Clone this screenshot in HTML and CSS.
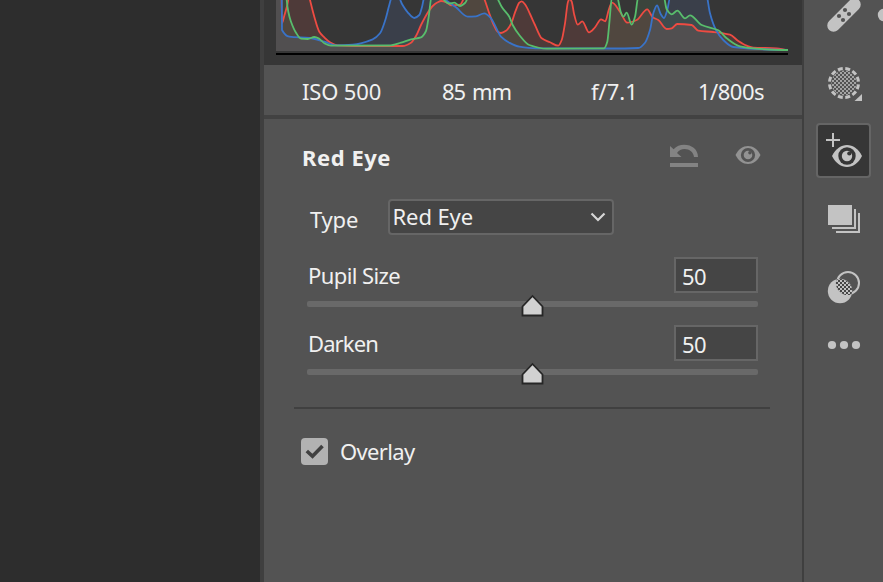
FILE: index.html
```
<!DOCTYPE html>
<html lang="en">
<head>
  <meta charset="UTF-8">
  <title>Red Eye</title>
  <link rel="stylesheet" href="styles.css">
</head>
<body>

<div class="app">
  <div class="canvas"></div>

  <div class="panel">
    <div class="histogram">
      <svg id="histogram" width="512" height="65" viewBox="276 0 512 65">
        <rect x="276" y="53" width="512" height="2" fill="#000"/>
      </svg>
    </div>

    <div class="exif">
      <span class="iso">ISO 500</span>
      <span class="focal">85 mm</span>
      <span class="aperture">f/7.1</span>
      <span class="shutter">1/800s</span>
    </div>

    <div class="tool-settings">
      <div class="heading">
        <h1>Red Eye</h1>
        <svg class="reset" width="28" height="24" viewBox="670 144 28 24" fill="#838383">
          <path d="M670 146L673.600 149.200C676.500 146 680 144.700 684 144.700C692 144.700 698 149.500 698 157H694C693.500 152 689.500 149 684.500 149C681.500 149 678.700 150.500 677 153L681.500 157H670Z"/>
          <path d="M670 163h28v4h-28z"/>
        </svg>
        <svg class="preview" width="26" height="20" viewBox="-13 -10 26 20">
          <path fill="#929292" d="M-12.500 0C-9.500 -6 -5 -9 0 -9S9.500 -6 12.500 0C9.500 6 5 9 0 9S-9.500 6 -12.500 0Z"/>
          <circle r="7.100" fill="#535353"/>
          <circle r="4.300" fill="#929292"/>
          <circle cx="1.900" cy="-2.200" r="1.700" fill="#535353"/>
        </svg>
      </div>

      <div class="type-row">
        <label>Type</label>
        <div class="select">
          <span>Red Eye</span>
          <svg width="16" height="10" viewBox="0 0 16 10"><path d="M1.500 1.500L8 8L14.500 1.500" fill="none" stroke="#d6d6d6" stroke-width="2.200"/></svg>
        </div>
      </div>

      <div class="slider">
        <div class="slider-top">
          <label class="pupil">Pupil Size</label>
          <div class="value">50</div>
        </div>
        <div class="track">
          <svg class="thumb" width="23" height="24" viewBox="0 0 23 24"><path d="M11.500 2L21.500 12.500V21.500H1.500V12.500Z"/></svg>
        </div>
      </div>

      <div class="slider">
        <div class="slider-top">
          <label class="darken">Darken</label>
          <div class="value">50</div>
        </div>
        <div class="track">
          <svg class="thumb" width="23" height="24" viewBox="0 0 23 24"><path d="M11.500 2L21.500 12.500V21.500H1.500V12.500Z"/></svg>
        </div>
      </div>

      <div class="overlay-row">
        <div class="checkbox">
          <svg width="27" height="27" viewBox="0 0 27 27"><path d="M5.800 13L11.500 18.300L21.500 8" fill="none" stroke="#404040" stroke-width="3.600"/></svg>
        </div>
        <label>Overlay</label>
      </div>
    </div>
  </div>

  <div class="toolbar">
    <!-- healing -->
    <svg width="67" height="50" viewBox="816 0 67 50">
      <path d="M833.500 25.500L854.500 4.500" stroke="#c3c3c3" stroke-width="12.500" stroke-linecap="round"/>
      <g fill="#535353">
        <circle cx="845" cy="10" r="2.100"/><circle cx="839" cy="16" r="2.100"/>
        <circle cx="849" cy="14" r="2.100"/><circle cx="843" cy="20" r="2.100"/>
      </g>
      <circle cx="884" cy="15" r="6.200" fill="#c3c3c3"/>
    </svg>
    <!-- masking -->
    <svg width="67" height="73" viewBox="816 50 67 73">
      <defs>
        <pattern id="checker" width="4" height="4" patternUnits="userSpaceOnUse">
          <path d="M0 0h2v2h-2zM2 2h2v2h-2z" fill="#c3c3c3"/>
        </pattern>
        <pattern id="checker-soft" width="4" height="4" patternUnits="userSpaceOnUse">
          <path d="M0 0h2v2h-2zM2 2h2v2h-2z" fill="#a4a4a4"/>
        </pattern>
      </defs>
      <circle cx="844" cy="83" r="12.500" fill="url(#checker-soft)"/>
      <circle cx="844" cy="83" r="14.500" fill="none" stroke="#c3c3c3" stroke-width="3" pathLength="120" stroke-dasharray="6.500 3.500" stroke-dashoffset="-1.750"/>
      <path d="M862 94V101H854.500Z" fill="#c3c3c3"/>
    </svg>
    <!-- red eye -->
    <div class="tool-active">
      <svg width="51" height="51" viewBox="818 125 51 51">
        <path d="M826 140h14M833 133v14" stroke="#c3c3c3" stroke-width="2"/>
        <g transform="translate(847 156)">
          <path fill="#c3c3c3" d="M-15 0C-11 -7.500 -6 -11 0 -11S11 -7.500 15 0C11 7.500 6 11 0 11S-11 7.500 -15 0Z"/>
          <circle r="8.700" fill="#363636"/>
          <circle r="5.200" fill="#c3c3c3"/>
          <circle cx="2.300" cy="-2.500" r="2.100" fill="#363636"/>
        </g>
      </svg>
    </div>
    <!-- snapshots -->
    <svg width="67" height="67" viewBox="816 178 67 67">
      <path d="M828 205h24v20h-24zM854 209h2v20h-24v-2h22zM858 213h2v20h-24v-2h22z" fill="#c3c3c3"/>
    </svg>
    <!-- presets -->
    <svg width="67" height="75" viewBox="816 245 67 75">
      <circle cx="840" cy="291" r="12.200" fill="#c3c3c3"/>
      <circle cx="848" cy="283" r="11" fill="none" stroke="#c3c3c3" stroke-width="2"/>
      <path d="M836.500 279.500A12 12 0 0 0 851.500 294.500A12 12 0 0 0 836.500 279.500Z" fill="#464646"/>
      <path d="M836.500 279.500A12 12 0 0 0 851.500 294.500A12 12 0 0 0 836.500 279.500Z" fill="url(#checker)"/>
    </svg>
    <!-- more -->
    <svg width="67" height="50" viewBox="816 320 67 50" fill="#c3c3c3">
      <circle cx="832" cy="345" r="4.100"/><circle cx="844" cy="345" r="4.100"/><circle cx="856" cy="345" r="4.100"/>
    </svg>
  </div>
</div>

<script src="script.js"></script>
</body>
</html>
```
FILE: styles.css
```
* {
  box-sizing: border-box;
}
body {
  margin: 0;
  background: #535353;
  color: #f0f0f0;
  font-family: Tahoma, 'Noto Sans', sans-serif;
  font-size: 22px;
  line-height: 30px;
  white-space: nowrap;
  overflow: hidden;
}
svg {
  display: block;
}
.app {
  display: flex;
  height: 582px;
}
.canvas {
  width: 260px;
  background: #2d2d2d;
}
.panel {
  width: 544px;
  border-left: 4px solid #3f3f3f;
  border-right: 2px solid #3f3f3f;
}

/* histogram */
.histogram {
  height: 65px;
  padding-left: 12px;
  background: #363636;
}
.line {
  fill: none;
  stroke-width: 1.8;
  stroke-linejoin: round;
}
.line-red {
  stroke: #ee4b42;
}
.line-green {
  stroke: #58bd6c;
}
.line-blue {
  stroke: #3973c8;
}
.fill {
  opacity: 0.12;
}
.fill-red {
  fill: #ff5a50;
}
.fill-green {
  fill: #60b068;
}
.fill-blue {
  fill: #5a84e0;
}

.exif {
  display: flex;
  height: 54px;
  padding: 11px 0 0 38px;
  border-bottom: 4px solid #424242;
}
.iso {
  width: 140px;
  letter-spacing: -0.15px;
}
.focal {
  width: 149px;
  letter-spacing: -1px;
  word-spacing: 2px;
}
.aperture {
  width: 107px;
}
.shutter {
  letter-spacing: -0.5px;
}

.tool-settings {
  padding: 24px 32px 0 30px;
}
.heading {
  display: flex;
  height: 56px;
  padding: 0 9px 0 8px;
}
.heading h1 {
  margin: -1px 0 0;
  font-size: 22px;
  line-height: 30px;
  letter-spacing: 0.55px;
}
.reset {
  margin: 1px 37px 0 auto;
}
.preview {
  margin-top: 2px;
}

.type-row {
  display: flex;
  height: 58px;
  padding-left: 16px;
}
.type-row label {
  width: 77.500px;
  padding-top: 5px;
  letter-spacing: -0.2px;
}
.select {
  display: flex;
  justify-content: space-between;
  width: 226px;
  height: 36px;
  padding: 0 6px 0 3px;
  background: #454545;
  border: 2px solid #666;
  border-radius: 4px;
  letter-spacing: -0.1px;
}
.select svg {
  margin-top: 11px;
}

.slider {
  height: 68px;
  padding: 0 12px 0 13px;
}
.slider-top {
  display: flex;
  justify-content: space-between;
  height: 44px;
}
.slider-top label {
  padding: 3px 0 0 1px;
}
.pupil {
  letter-spacing: -0.6px;
}
.darken {
  letter-spacing: -0.9px;
}
.value {
  width: 84px;
  height: 36px;
  padding: 2px 0 0 6px;
  background: #454545;
  border: 2px solid #666;
  letter-spacing: -0.5px;
}
.track {
  position: relative;
  height: 6px;
  background: #696969;
  border-radius: 2px;
}
.thumb {
  position: absolute;
  left: 214px;
  top: -7px;
  fill: #d1d1d1;
  stroke: #262626;
  stroke-width: 1.8;
}

.overlay-row {
  display: flex;
  margin-top: 14px;
  padding: 29px 0 0 7px;
  border-top: 2px solid #404040;
}
.overlay-row label {
  margin-top: -2px;
  letter-spacing: -0.65px;
}
.checkbox {
  width: 27px;
  height: 27px;
  margin-right: 12px;
  background: #b2b2b2;
  border-radius: 4px;
}

.toolbar {
  width: 79px;
  padding-left: 12px;
}
.tool-active {
  width: 55px;
  height: 55px;
  background: #363636;
  border: 2px solid #656565;
  border-radius: 4px;
}
```
FILE: script.js
```
const channels = {
  red: [[276,-40],[281,-40],[282,23],[284.5,15],[287.3,5],[290,-8],[307,-12],[310,0],[314.3,16.7],[319.3,31.7],[324.3,37.3],[330,42.3],[337.7,45.3],[356,46],[402.7,46],[411,42.7],[416,36],[421,25],[427.7,12.7],[432.7,6],[437.7,2.3],[441,1],[446.7,2.3],[451,5.3],[460,4.7],[465,-3],[481,-8],[484.7,0],[488.7,11.7],[493.3,24],[497.7,31.7],[501,33],[506,30.7],[511,24],[515.3,11.7],[519.3,2.7],[521.7,1.3],[525.3,4.7],[530,14],[535,25],[541.7,38.3],[550,42.3],[558.3,45.7],[561.7,40],[565,23.3],[568,1.7],[569.7,-1],[571.7,1.7],[574.3,15],[577.7,24.7],[582.3,21.3],[589,32.3],[595,27.3],[601,19.3],[605.3,21.3],[608.7,10],[612,2.7],[620,11.7],[627.3,22.7],[636.7,20],[647.3,9.3],[652.7,17.3],[658.3,20],[666.7,29],[671.7,28.3],[677.3,24],[691.7,25],[698.3,30.7],[713.3,32],[730,34.7],[738.3,41],[746.7,45.7],[753.3,47.7],[776.7,48.3],[788,50]],
  blue: [[276,-40],[281.5,-40],[282,30],[289.3,36.7],[309.3,38],[324.3,41.7],[336,45.3],[352.7,44.7],[372.7,39.3],[380,33.3],[385.3,20],[389.3,5],[392,-3],[399,-2],[402,4],[407.7,12.3],[414.3,18],[419.3,15],[422,7],[425,-5],[442,-6],[446,0],[456,7.3],[467.7,16.7],[476,16.3],[484.3,13.3],[491,18.3],[501,36.7],[509.3,42.7],[519.3,46.7],[536,48.3],[611.7,48.5],[638.3,48],[645,42.7],[650,30],[653.3,13.3],[657,5.3],[660.7,14],[664,18],[667.3,10],[670,-2],[706.5,-8],[707.7,0],[710,13.3],[716,30],[723.3,40],[733.3,47],[788,50]],
  green: [[276,-40],[285,-40],[286.7,0],[288.3,11.7],[291,21.7],[296,32.7],[301,38.7],[307.7,39],[314.3,37],[319.3,38.7],[324.3,43.3],[331,45.7],[389.3,45.5],[401,42.7],[411,39.3],[421,37.3],[426,31],[428.7,16.7],[431.5,-3],[442,-4],[444,0],[449.3,3.7],[454.3,2.7],[460,6],[465.3,2.7],[469,-4],[496,-5],[498.3,0],[502,7.3],[509.3,16.7],[512.7,25],[519.3,35],[529.3,45],[546.7,48.7],[604,48.3],[607.3,41.7],[609.3,23.3],[612,-3],[617,-3],[620.7,11.7],[623.3,16.7],[626.7,12.7],[631.7,24.7],[635,16.7],[638.5,-4],[663.5,-4],[666.7,9.3],[671.7,14.3],[677.3,10.7],[685,18.3],[690,15.3],[701.7,25],[718.3,30.3],[726.7,38.3],[740,46.3],[756.7,48.7],[788,50]]
};

// smooth curve that never overshoots its points
function curve(p) {
  const slope = p.map((_, i) => {
    if (i === 0 || i === p.length - 1) return 0;
    const a = (p[i][1] - p[i - 1][1]) / (p[i][0] - p[i - 1][0]);
    const b = (p[i + 1][1] - p[i][1]) / (p[i + 1][0] - p[i][0]);
    return a * b <= 0 ? 0 : 2 * a * b / (a + b);
  });
  let d = `M${p[0]}`;
  for (let i = 1; i < p.length; i++) {
    const [x0, y0] = p[i - 1];
    const [x1, y1] = p[i];
    const h = (x1 - x0) / 3;
    d += `C${x0 + h} ${y0 + slope[i - 1] * h} ${x1 - h} ${y1 - slope[i] * h} ${x1} ${y1}`;
  }
  return d;
}

const svg = document.getElementById('histogram');

function addPath(className, d) {
  const path = document.createElementNS('http://www.w3.org/2000/svg', 'path');
  path.setAttribute('class', className);
  path.setAttribute('d', d);
  svg.appendChild(path);
}

for (const name in channels) {
  addPath(`fill fill-${name}`, curve(channels[name]) + 'V51H276Z');
}
for (const name in channels) {
  addPath(`line line-${name}`, curve(channels[name]));
}
```
